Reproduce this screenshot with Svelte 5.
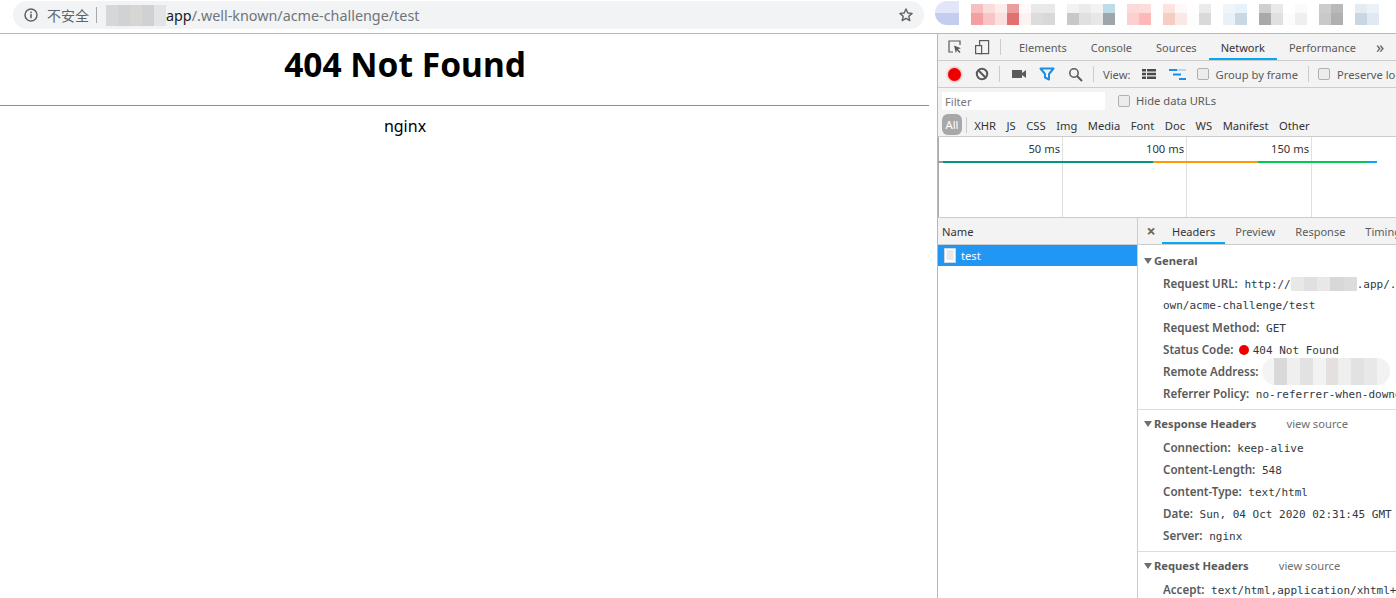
<script lang="ts">
    // mosaic cells for the blurred-out bookmarks/extensions, [top, bottom]
    const extCells = [
        ['#f7c0c0', '#f4a0a0'], ['#fbdcdc', '#f8c4c4'], ['#fcecec', '#fae0e0'], ['#eb9c9c', '#e37070'],
        ['#fefafa', '#fdf2f2'], ['#e9e9e9', '#dcdcdc'], ['#e9e9e9', '#d8d8d6'], ['#fff', '#fff'],
        ['#f2f2f2', '#c8c8c8'], ['#ebebeb', '#e0e0e0'], ['#f2f3f2', '#e6e7e8'], ['#bcdde6', '#9ea5ab'],
        ['#fff', '#fff'], ['#fddada', '#fdd0d0'], ['#fddcdc', '#feb8b8'], ['#fff', '#fff'],
        ['#fde2de', '#f5cdc2'], ['#fff8f8', '#f9e8e4'], ['#fff', '#fdfdfd'], ['#ebebeb', '#d9d9d9'],
        ['#fff', '#fff'], ['#eef6fb', '#e9f0f7'], ['#e8f2fa', '#c9d8e4'], ['#fff', '#fff'],
        ['#cfcfcf', '#a9a9a9'], ['#e9e9e9', '#e0e0e0'], ['#fff', '#fcfcfc'], ['#fafafa', '#efefef'],
        ['#fff', '#fff'], ['#ccc', '#c9c9c9'], ['#b9b9b9', '#b0b0b0'], ['#fff', '#fff'],
        ['#e4ebf3', '#c9d7e3'], ['#eaf1f7', '#e0e8f1']
    ];
    const urlCells = ['#d6d8d8', '#d0d3d3', '#d8d6d2', '#cfd1d2', '#e2e4e5'];
    const addrCells = ['#f4f4f4', '#d9d9d9', '#efefef', '#e2e2e2', '#f2f2f2', '#e4e0e0', '#eeeeee', '#e2e2e2', '#e8e8e8', '#f2f2f2'];
    const linkCells = ['#e8e8e8', '#e0e0e0', '#e8e8e8', '#d8d8d8', '#dcdcdc'];

    const tabs = ['Elements', 'Console', 'Sources', 'Network', 'Performance'];
    const types = ['XHR', 'JS', 'CSS', 'Img', 'Media', 'Font', 'Doc', 'WS', 'Manifest', 'Other'];

    const responseHeaders = [
        ['Connection:', 'keep-alive'],
        ['Content-Length:', '548'],
        ['Content-Type:', 'text/html'],
        ['Date:', 'Sun, 04 Oct 2020 02:31:45 GMT'],
        ['Server:', 'nginx']
    ];
</script>

<div class="browser">
    <header class="chrome">
        <div class="omnibox">
            <svg class="info" width="16" height="16" viewBox="0 0 16 16">
                <circle cx="8" cy="8" r="6" fill="none" stroke="#5f6368" stroke-width="1.5" />
                <rect x="7.2" y="7" width="1.6" height="4.2" fill="#5f6368" />
                <rect x="7.2" y="4.6" width="1.6" height="1.6" fill="#5f6368" />
            </svg>
            <span class="insecure">不安全</span>
            <span class="omni-sep"></span>
            <span class="url-mosaic">
                {#each urlCells as c}<i style="background:{c}"></i>{/each}
            </span>
            <span class="url"><b>app</b>/.well-known/acme-challenge/test</span>
            <svg class="star" width="16" height="16" viewBox="0 0 16 16">
                <path d="M8 2l1.8 4 4.3.4-3.3 2.9 1 4.3L8 11.3l-3.8 2.3 1-4.3-3.3-2.9 4.3-.4z" fill="none" stroke="#5f6368" stroke-width="1.4" stroke-linejoin="round" />
            </svg>
        </div>
        <div class="ext-blob"></div>
        <div class="ext-mosaic">
            {#each extCells as c}
                <span class="cell"><i style="background:{c[0]}"></i><i style="background:{c[1]}"></i></span>
            {/each}
        </div>
    </header>

    <main class="split">
        <section class="page">
            <h1>404 Not Found</h1>
            <hr />
            <p>nginx</p>
        </section>

        <section class="devtools">
            <div class="tabbar">
                <svg class="tool" width="16" height="16" viewBox="0 0 16 16">
                    <path d="M6 13H2V2h11v4" fill="none" stroke="#5a5a5a" stroke-width="1.2" />
                    <path d="M7 6.5l7 2.8-3 1 2.5 2.7-1 1-2.6-2.7-1 3z" fill="#5a5a5a" />
                </svg>
                <svg class="tool" width="16" height="16" viewBox="0 0 16 16">
                    <rect x="5.6" y="1.6" width="9" height="13" fill="none" stroke="#5a5a5a" stroke-width="1.2" />
                    <rect x="1.6" y="6.6" width="6" height="8" fill="#f3f3f3" stroke="#5a5a5a" stroke-width="1.2" />
                </svg>
                <span class="sep tab-sep"></span>
                {#each tabs as t}
                    <span class="tab" class:active={t === 'Network'}>{t}</span>
                {/each}
                <span class="more">»</span>
            </div>

            <div class="toolbar">
                <span class="record"></span>
                <svg width="14" height="14" viewBox="0 0 14 14">
                    <circle cx="7" cy="7" r="5.2" fill="none" stroke="#5a5a5a" stroke-width="2" />
                    <path d="M3.3 3.3l7.4 7.4" stroke="#5a5a5a" stroke-width="2" />
                </svg>
                <span class="sep"></span>
                <svg width="14" height="10" viewBox="0 0 14 10">
                    <rect x="0" y="1" width="10" height="8" fill="#5a5a5a" />
                    <path d="M10 4l4-3v8l-4-3z" fill="#5a5a5a" />
                </svg>
                <svg class="gap-l" width="16" height="14" viewBox="0 0 16 14">
                    <path d="M1.5 1.5h13L10 7v5.5L6 10.5V7z" fill="none" stroke="#1a8fe8" stroke-width="2" stroke-linejoin="round" />
                </svg>
                <svg class="gap-l" width="15" height="15" viewBox="0 0 15 15">
                    <circle cx="6" cy="6" r="4.2" fill="none" stroke="#5a5a5a" stroke-width="1.5" />
                    <path d="M9 9l5 5" stroke="#5a5a5a" stroke-width="2" />
                </svg>
                <span class="sep"></span>
                <span class="view-label">View:</span>
                <svg width="14" height="10" viewBox="0 0 14 10">
                    <path d="M0 0h4v2.5H0zM5 0h9v2.5H5zM0 3.7h4v2.5H0zM5 3.7h9v2.5H5zM0 7.4h4V10H0zM5 7.4h9V10H5z" fill="#4a4a4a" />
                </svg>
                <svg class="gap-l" width="17" height="11" viewBox="0 0 17 11">
                    <path d="M0 0h8v2H0z" fill="#1a8fe8" />
                    <path d="M8 0h9v2H8z" fill="#b9d8f2" />
                    <path d="M4 4.500h8v2H4z" fill="#1a8fe8" />
                    <path d="M10 9h7v2h-7z" fill="#1a8fe8" />
                </svg>
                <label class="check group"><span class="box"></span>Group by frame</label>
                <span class="sep"></span>
                <label class="check preserve"><span class="box"></span>Preserve log</label>
            </div>

            <div class="filterbar">
                <span class="filter">Filter</span>
                <label class="check"><span class="box"></span>Hide data URLs</label>
            </div>

            <div class="typebar">
                <span class="all">All</span>
                <span class="sep type-sep"></span>
                {#each types as t}<span class="type">{t}</span>{/each}
            </div>

            <div class="overview">
                <div class="grid-col first"><span>50 ms</span></div>
                <div class="grid-col"><span>100 ms</span></div>
                <div class="grid-col last"><span>150 ms</span></div>
                <div class="timebar">
                    <i class="t-gray"></i><i class="t-teal"></i><i class="t-orange"></i><i class="t-green"></i><i class="t-blue"></i>
                </div>
            </div>

            <div class="lower">
                <div class="names">
                    <div class="names-head">Name</div>
                    <div class="row-selected">
                        <svg width="12" height="15" viewBox="0 0 12 15">
                            <rect x="0.5" y="0.5" width="11" height="14" fill="#fff" stroke="#c9d6e2" />
                            <path d="M2.500 3h7M2.500 5h7M2.500 7h7M2.500 9h7M2.500 11h7" stroke="#d2d2d2" />
                        </svg>
                        test
                    </div>
                </div>

                <div class="details">
                    <div class="detail-tabs">
                        <span class="close">×</span>
                        <span class="dtab active">Headers</span>
                        <span class="dtab">Preview</span>
                        <span class="dtab">Response</span>
                        <span class="dtab">Timing</span>
                    </div>

                    <div class="block general">
                        <div class="title">General</div>
                        <div class="kv">
                            <b>Request URL:</b> http://<span class="inline-mosaic">{#each linkCells as c}<i style="background:{c}"></i>{/each}</span>.app/.well-kn
                        </div>
                        <div class="kv">own/acme-challenge/test</div>
                        <div class="kv"><b>Request Method:</b> GET</div>
                        <div class="kv"><b>Status Code:</b> <span class="dot"></span> 404 Not Found</div>
                        <div class="kv">
                            <b>Remote Address:</b>
                            <span class="addr-mosaic">{#each addrCells as c}<i style="background:{c}"></i>{/each}</span>
                        </div>
                        <div class="kv"><b>Referrer Policy:</b> no-referrer-when-downgrade</div>
                    </div>

                    <div class="block">
                        <div class="title">Response Headers<span class="source">view source</span></div>
                        {#each responseHeaders as h}
                            <div class="kv"><b>{h[0]}</b> {h[1]}</div>
                        {/each}
                    </div>

                    <div class="block">
                        <div class="title">Request Headers<span class="source">view source</span></div>
                        <div class="kv"><b>Accept:</b> text/html,application/xhtml+xml</div>
                    </div>
                </div>
            </div>
        </section>
    </main>
</div>

<style>
    :global(body) { margin: 0; background: #fff; overflow: hidden; }

    .browser {
        width: 1396px; height: 598px; overflow: hidden;
        font-family: "Noto Sans", "Noto Sans CJK SC", sans-serif;
        display: flex; flex-direction: column;
    }

    /* browser top bar */
    .chrome {
        height: 33px; flex: none; display: flex; align-items: flex-start; box-sizing: content-box;
        border-bottom: 1px solid #b8b8b8; position: relative; overflow: hidden;
    }
    .omnibox {
        margin: 1px 0 0 13px; width: 911px; height: 28px; background: #f1f3f4; border-radius: 14px;
        display: flex; align-items: center; padding-left: 10px; box-sizing: border-box; flex: none;
    }
    .insecure { font-size: 14px; color: #5f6368; margin-left: 8px; }
    .omni-sep { width: 1px; height: 16px; background: #a8a8a8; margin: 0 9px 0 7px; }
    .url-mosaic { display: flex; width: 60px; height: 21px; }
    .url-mosaic i { flex: 1; }
    .url { font-size: 14.35px; color: #70757a; }
    .url b { font-weight: 400; color: #202124; }
    .star { margin-left: auto; margin-right: 10px; }
    .ext-blob {
        margin: 1px 0 0 11px; width: 24px; height: 24px; flex: none;
        border-radius: 12px 0 0 12px;
        background: linear-gradient(#e2e6f8 50%, #c2cdf0 50%);
    }
    .ext-mosaic { display: flex; margin: 4px 0 0 12px; flex: none; }
    .cell { display: flex; flex-direction: column; width: 12px; height: 21px; }
    .cell i:first-child { height: 9px; }
    .cell i:last-child { height: 12px; }

    .split { flex: 1; display: flex; min-height: 0; }

    /* page */
    .page { width: 937px; flex: none; color: #000; }
    .page h1 { width: 810px; margin: 8px 0 0; text-align: center; font-size: 33.5px; line-height: 44px; font-weight: 700; }
    .page hr { width: 929px; margin: 19px 0 0; border: none; border-top: 1px solid #8f8f8f; }
    .page p { width: 810px; margin: 9px 0 0; text-align: center; font-size: 16px; line-height: 22px; }

    /* devtools */
    .devtools {
        flex: 1; min-width: 0; border-left: 1px solid #b8b8b8; font-size: 11.2px; color: #5a5a5a;
        display: flex; flex-direction: column; overflow: hidden;
    }
    .tabbar {
        height: 26px; background: #f3f3f3; border-bottom: 1px solid #ccc; display: flex; align-items: center;
        padding-left: 9px; white-space: nowrap;
    }
    .tool { flex: none; margin-right: 11px; }
    .tool + .tool { margin-right: 0; }
    .sep { width: 1px; height: 16px; background: #ccc; flex: none; margin: 0 9px 0 10px; }
    .tab-sep { margin: 0 6px 0 10px; }
    .tab { padding: 0 12px; font-size: 11px; line-height: 28px; height: 26px; box-sizing: border-box; flex: none; }
    .tab.active { color: #333; border-bottom: 2px solid #03a9f4; }
    .more { margin-left: 8px; font-size: 16px; line-height: 20px; color: #555; }

    .toolbar {
        height: 26px; background: #f3f3f3; border-bottom: 1px solid #ccc; display: flex; align-items: center;
        padding-left: 10px; white-space: nowrap;
    }
    .toolbar svg { flex: none; }
    .record { width: 13px; height: 13px; border-radius: 50%; background: #e00; box-shadow: 0 0 2px 1px #f3b0b0; margin-right: 14px; flex: none; }
    .toolbar .sep + svg { margin-left: 3px; }
    .gap-l { margin-left: 13px; }
    .view-label { margin-right: 12px; }
    .check { display: inline-flex; align-items: center; white-space: nowrap; }
    .box {
        width: 10px; height: 10px; margin-right: 6px; flex: none; border: 1px solid #b0b0b0; border-radius: 2px;
        background: #ececec;
    }
    .group { margin-left: 11px; }
    .preserve .box { margin-right: 7px; }

    .filterbar { height: 25px; background: #f3f3f3; display: flex; align-items: center; padding-left: 4px; }
    .filter { width: 160px; height: 18px; background: #fff; color: #757575; line-height: 19px; padding-left: 3px; margin-right: 13px; }

    .typebar {
        height: 23px; background: #f3f3f3; border-bottom: 1px solid #ccc; display: flex; align-items: center;
        padding-left: 4px; white-space: nowrap;
    }
    .all { background: #a8a8a8; color: #fff; border-radius: 6px; width: 20px; height: 21px; line-height: 21px; text-align: center; flex: none; }
    .type-sep { margin: 0 2px 0 4px; }
    .type { margin: 2px 5.25px 0; color: #333; }

    .overview {
        height: 80px; flex: none; display: flex; position: relative; border-bottom: 1px solid #ccc; color: #333;
    }
    .grid-col { width: 124px; border-right: 1px solid #e0e0e0; text-align: right; box-sizing: border-box; padding: 4px 2px 0 0; flex: none; }
    .grid-col.first { width: 125px; border-left: 1px solid #aaa; }
    .grid-col.last { width: 125px; }
    .timebar { position: absolute; left: 0; top: 24px; display: flex; height: 2px; }
    .timebar i { display: block; height: 2px; }
    .t-gray { width: 5px; background: #999; }
    .t-teal { width: 210px; background: #009688; }
    .t-orange { width: 105px; background: #ff9800; }
    .t-green { width: 109px; background: #00c853; }
    .t-blue { width: 10px; background: #03a9f4; }

    .lower { flex: 1; display: flex; min-height: 0; }
    .names { width: 199px; flex: none; border-right: 1px solid #ccc; }
    .names-head { height: 26px; line-height: 28px; background: #f3f3f3; border-bottom: 1px solid #ccc; padding-left: 4px; color: #333; }
    .row-selected {
        height: 21px; background: #2196f3; color: #fff; display: flex; align-items: center; gap: 5px; padding-left: 6px;
    }

    .details { flex: 1; min-width: 0; overflow: hidden; white-space: nowrap; }
    .detail-tabs { height: 26px; background: #f3f3f3; border-bottom: 1px solid #ccc; display: flex; align-items: center; }
    .close { width: 24px; text-align: center; font-size: 16px; font-weight: 700; flex: none; color: #666; margin-left: 1px; margin-right: -1px; }
    .dtab { padding: 0 10px; font-size: 11px; line-height: 28px; height: 26px; box-sizing: border-box; flex: none; }
    .dtab.active { color: #333; border-bottom: 2px solid #03a9f4; }

    .block { border-bottom: 1px solid #ddd; padding: 4px 0 4px; }
    .block.general { padding-top: 6px; }
    .title { height: 20px; line-height: 20px; margin-bottom: 3px; font-weight: 700; color: #5a5a5a; padding-left: 16px; position: relative; }
    .general .title { margin-bottom: 2px; }
    .title::before {
        content: ""; position: absolute; left: 6px; top: 7px; border: 4px solid transparent; border-top: 6px solid #6e6e6e; border-bottom: 0;
    }
    .source { font-weight: 400; margin-left: 30px; color: #6e6e6e; }
    .kv { height: 22px; line-height: 22px; padding-left: 25px; font-family: "DejaVu Sans Mono", monospace; font-size: 11px; color: #303942; }
    .kv b { font-family: "Noto Sans", sans-serif; font-size: 11.6px; font-weight: 600; color: #5a5a5a; }
    .inline-mosaic { display: inline-flex; width: 66px; height: 14px; vertical-align: -3px; }
    .inline-mosaic i, .addr-mosaic i { flex: 1; }
    .addr-mosaic { position: absolute; display: inline-flex; width: 128px; height: 27px; margin: -3px 0 0 3px; border-radius: 13px; overflow: hidden; }
    .dot { display: inline-block; width: 10px; height: 10px; border-radius: 50%; background: #e00; vertical-align: -1px; margin: 0 -3px 0 -1px; }
</style>
